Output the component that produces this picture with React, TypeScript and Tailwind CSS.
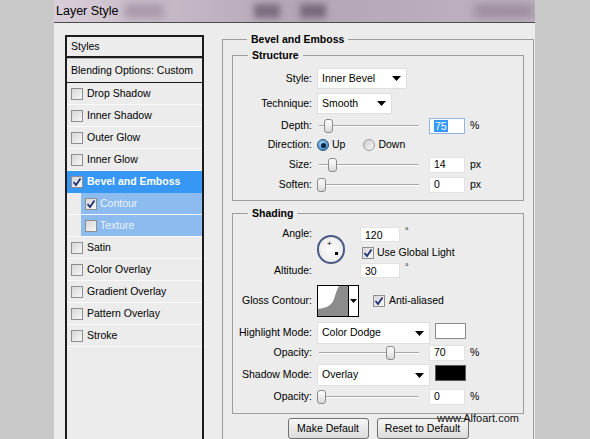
type RowProps = {
  label: string;
  on?: boolean;
  kind?: "normal" | "selected" | "sub";
};

const font = "font-['Liberation_Sans',Arial,sans-serif]";

function Check({ on }: { on?: boolean }) {
  return (
    <span className="inline-flex w-[12px] h-[12px] shrink-0 items-center justify-center border border-[#8e8e8e] bg-gradient-to-br from-[#d6d6d6] to-[#f7f7f7]">
      {on && (
        <svg width="10" height="10" viewBox="0 0 10 10">
          <path d="M1.5 5 L4 8 L8.5 1.5" fill="none" stroke="#1f2f73" strokeWidth="1.8" />
        </svg>
      )}
    </span>
  );
}

function StyleRow({ label, on, kind = "normal" }: RowProps) {
  if (kind === "sub") {
    return (
      <div className="h-[22px] flex border-b border-[#fafafa]">
        <div className="w-[14px] shrink-0" />
        <div className="flex-1 flex items-center gap-[3px] pl-[4px] bg-[#8bbbef] text-[#eef4ff]">
          <Check on={on} />
          <span>{label}</span>
        </div>
      </div>
    );
  }
  return (
    <div
      className={
        kind === "selected"
          ? "h-[22px] flex items-center gap-[4px] pl-[4px] bg-[#3797f4] text-white font-bold border-b border-[#3797f4]"
          : "h-[22px] flex items-center gap-[4px] pl-[4px] border-b border-[#fafafa]"
      }
    >
      <Check on={on} />
      <span>{label}</span>
    </div>
  );
}

function Slider({ thumb }: { thumb: string }) {
  return (
    <div className="relative w-[102px] h-[16px] shrink-0">
      <div className="absolute left-[2px] right-0 top-[7px] h-[2px] border-t border-[#a8a8a8] border-b border-b-white" />
      <div className={"absolute top-[1px] w-[9px] h-[14px] rounded-[3px] border border-[#8a8a8a] bg-gradient-to-b from-white to-[#d9d9d9] " + thumb} />
    </div>
  );
}

function Field({ value, w = "w-[36px]", focus }: { value: string; w?: string; focus?: boolean }) {
  return (
    <div
      className={
        "h-[16px] flex items-center pl-[4px] bg-white border " +
        w +
        (focus ? " border-[#8fb6e0]" : " border-[#e2e2e2]")
      }
    >
      {focus ? <span className="bg-[#3399ff] text-white px-[1px] leading-[12px]">{value}</span> : <span>{value}</span>}
    </div>
  );
}

function Select({ value, w }: { value: string; w: string }) {
  return (
    <div className={"h-[21px] flex items-center justify-between pl-[4px] pr-[5px] bg-white border border-[#dedede] " + w}>
      <span>{value}</span>
      <svg width="9" height="5" viewBox="0 0 9 5">
        <path d="M0 0 H9 L4.5 5 Z" fill="#000" />
      </svg>
    </div>
  );
}

function Label({ children }: { children: string }) {
  return <div className="w-[79px] shrink-0 text-right">{children}</div>;
}

function Radio({ on }: { on?: boolean }) {
  return on ? (
    <span className="w-[12px] h-[12px] rounded-full border border-[#2b4f7a] bg-[radial-gradient(circle_at_40%_35%,#9fd3f7,#2a75b8)] flex items-center justify-center">
      <span className="w-[5px] h-[5px] rounded-full bg-[#0c2640]" />
    </span>
  ) : (
    <span className="w-[12px] h-[12px] rounded-full border border-[#9a9a9a] bg-gradient-to-br from-[#cfcfcf] to-[#f6f6f6]" />
  );
}

export default function App() {
  return (
    <div className={"relative w-[590px] h-[439px] overflow-hidden flex bg-[#c9c9c9] text-[10.5px] text-black " + font}>
      <div className="w-[54px] shrink-0" />
      <div className="w-[481px] shrink-0 flex flex-col bg-[#ececec]">
        {/* title bar */}
        <div className="relative h-[23px] shrink-0 overflow-hidden bg-gradient-to-r from-[#d8cdd8] via-[#b3a5b5] to-[#c0b2c1] border-b border-[#4a4a4a]">
          <div className="absolute left-[70px] top-[4px] w-[40px] h-[14px] bg-[#a897aa] blur-[4px]" />
          <div className="absolute left-[200px] top-[4px] w-[26px] h-[14px] bg-[#7d6d80] blur-[3px]" />
          <div className="absolute left-[246px] top-[4px] w-[26px] h-[14px] bg-[#7a6a7e] blur-[3px]" />
          <div className="absolute left-[420px] top-[4px] w-[60px] h-[14px] bg-[#9c8b9f] blur-[5px]" />
          <span className="relative pl-[2px] text-[12.5px] leading-[22px]">Layer Style</span>
        </div>

        <div className="flex-1 flex">
          {/* styles list */}
          <div className="w-[150px] shrink-0 pl-[11px] pt-[12px] flex">
            <div className="w-[139px] border-2 border-b-0 border-[#1c1c1c] flex flex-col">
              <div className="h-[21px] flex items-center pl-[4px] border-b-2 border-[#1c1c1c]">Styles</div>
              <div className="h-[25px] flex items-center pl-[4px] border-t border-[#b5b5b5] border-b border-b-[#1c1c1c]">
                Blending Options: Custom
              </div>
              <StyleRow label="Drop Shadow" />
              <StyleRow label="Inner Shadow" />
              <StyleRow label="Outer Glow" />
              <StyleRow label="Inner Glow" />
              <StyleRow label="Bevel and Emboss" on kind="selected" />
              <StyleRow label="Contour" on kind="sub" />
              <StyleRow label="Texture" kind="sub" />
              <StyleRow label="Satin" />
              <StyleRow label="Color Overlay" />
              <StyleRow label="Gradient Overlay" />
              <StyleRow label="Pattern Overlay" />
              <StyleRow label="Stroke" />
            </div>
          </div>

          {/* settings */}
          <div className="flex-1 pl-[18px] pt-[9px]">
            <fieldset className="w-[312px] border border-[#9d9d9d] pl-[9px] h-[420px]">
              <legend className="ml-[15px] px-[4px] font-bold leading-[14px]">Bevel and Emboss</legend>

              <fieldset className="mt-[2px] w-[292px] border border-[#9d9d9d] pt-[6px] pb-[7px]">
                <legend className="ml-[15px] px-[4px] font-bold leading-[14px]">Structure</legend>
                <div className="flex flex-col">
                  <div className="h-[21px] flex items-center gap-[5px]">
                    <Label>Style:</Label>
                    <Select value="Inner Bevel" w="w-[90px]" />
                  </div>
                  <div className="mt-[4px] h-[21px] flex items-center gap-[5px]">
                    <Label>Technique:</Label>
                    <Select value="Smooth" w="w-[75px]" />
                  </div>
                  <div className="mt-[4px] h-[16px] flex items-center gap-[5px]">
                    <Label>Depth:</Label>
                    <Slider thumb="left-[7px]" />
                    <div className="ml-[5px]">
                      <Field value="75" focus />
                    </div>
                    <span>%</span>
                  </div>
                  <div className="mt-[3px] h-[16px] flex items-center gap-[5px]">
                    <Label>Direction:</Label>
                    <div className="flex items-center gap-[3px]">
                      <Radio on />
                      <span>Up</span>
                    </div>
                    <div className="ml-[13px] flex items-center gap-[3px]">
                      <Radio />
                      <span>Down</span>
                    </div>
                  </div>
                  <div className="mt-[4px] h-[16px] flex items-center gap-[5px]">
                    <Label>Size:</Label>
                    <Slider thumb="left-[11px]" />
                    <div className="ml-[5px]">
                      <Field value="14" />
                    </div>
                    <span>px</span>
                  </div>
                  <div className="mt-[4px] h-[16px] flex items-center gap-[5px]">
                    <Label>Soften:</Label>
                    <Slider thumb="left-[0px]" />
                    <div className="ml-[5px]">
                      <Field value="0" />
                    </div>
                    <span>px</span>
                  </div>
                </div>
              </fieldset>

              <fieldset className="mt-[5px] w-[292px] border border-[#9d9d9d] pt-[7px] pb-[8px]">
                <legend className="ml-[15px] px-[4px] font-bold leading-[14px]">Shading</legend>
                <div className="grid grid-cols-[79px_28px_auto] grid-rows-[15px_21px_15px] gap-x-[5px]">
                  <div className="text-right leading-[15px] mt-[-1px]">Angle:</div>
                  <div className="row-span-3 flex items-center -mt-[6px]">
                    <div className="relative w-[29px] h-[29px] rounded-full border-2 border-[#4b5a84] bg-[radial-gradient(circle,#ffffff,#e4e4e4)]">
                      <span className="absolute left-[8px] top-[3px] text-[8px] leading-[8px]">+</span>
                      <span className="absolute left-[16px] top-[15px] w-[3px] h-[3px] bg-black" />
                    </div>
                  </div>
                  <div className="flex items-start gap-[5px] pl-[10px]">
                    <div className="w-[40px] h-[15px] pl-[4px] bg-white border border-[#e2e2e2] leading-[14px]">120</div>
                    <span className="text-[9px] leading-[9px]">°</span>
                  </div>
                  <div />
                  <div className="flex items-center gap-[3px] pl-[12px]">
                    <Check on />
                    <span>Use Global Light</span>
                  </div>
                  <div className="text-right leading-[15px]">Altitude:</div>
                  <div className="flex items-start gap-[5px] pl-[10px]">
                    <div className="w-[40px] h-[15px] pl-[4px] bg-white border border-[#e2e2e2] leading-[14px]">30</div>
                    <span className="text-[9px] leading-[9px]">°</span>
                  </div>
                </div>

                <div className="mt-[7px] h-[32px] flex items-center gap-[5px]">
                  <Label>Gloss Contour:</Label>
                  <div className="flex h-[32px] border border-black">
                    <svg width="30" height="30" viewBox="0 0 30 30" className="bg-white">
                      <path d="M0 30 L0 23 C 9 22, 14 19, 16 13 C 18 7, 19 3, 21 0 L30 0 L30 30 Z" fill="#8c8c8c" />
                    </svg>
                    <div className="w-[10px] flex items-center justify-center border-l border-black bg-white">
                      <svg width="7" height="4" viewBox="0 0 7 4">
                        <path d="M0 0 H7 L3.5 4 Z" fill="#000" />
                      </svg>
                    </div>
                  </div>
                  <div className="ml-[9px] flex items-center gap-[4px] -mt-[1px]">
                    <Check on />
                    <span>Anti-aliased</span>
                  </div>
                </div>

                <div className="mt-[5px] h-[22px] flex items-center gap-[5px]">
                  <Label>Highlight Mode:</Label>
                  <Select value="Color Dodge" w="w-[113px] h-[22px]" />
                  <div className="w-[31px] h-[16px] -mt-[4px] bg-white border border-[#8a8a8a]" />
                </div>
                <div className="mt-[1px] h-[16px] flex items-center gap-[5px]">
                  <Label>Opacity:</Label>
                  <Slider thumb="left-[69px]" />
                  <div className="ml-[5px]">
                    <Field value="70" />
                  </div>
                  <span>%</span>
                </div>
                <div className="mt-[3px] h-[22px] flex items-center gap-[5px]">
                  <Label>Shadow Mode:</Label>
                  <Select value="Overlay" w="w-[113px] h-[22px]" />
                  <div className="w-[31px] h-[16px] -mt-[4px] bg-black border border-[#5a5a5a]" />
                </div>
                <div className="mt-[3px] h-[16px] flex items-center gap-[5px]">
                  <Label>Opacity:</Label>
                  <Slider thumb="left-[0px]" />
                  <div className="ml-[5px]">
                    <Field value="0" />
                  </div>
                  <span>%</span>
                </div>
              </fieldset>

              <div className="mt-[4px] pr-[9px] flex justify-center gap-[8px]">
                <button className="w-[81px] h-[21px] rounded-[3px] border border-[#707070] bg-gradient-to-b from-[#f6f6f6] to-[#dcdcdc]">
                  Make Default
                </button>
                <button className="w-[92px] h-[21px] rounded-[3px] border border-[#707070] bg-gradient-to-b from-[#f6f6f6] to-[#dcdcdc]">
                  Reset to Default
                </button>
              </div>
            </fieldset>
          </div>
        </div>
      </div>
      <span className="absolute left-[437px] top-[412px] text-[11px] leading-[12px] text-[#111]">www.Alfoart.com</span>
    </div>
  );
}
